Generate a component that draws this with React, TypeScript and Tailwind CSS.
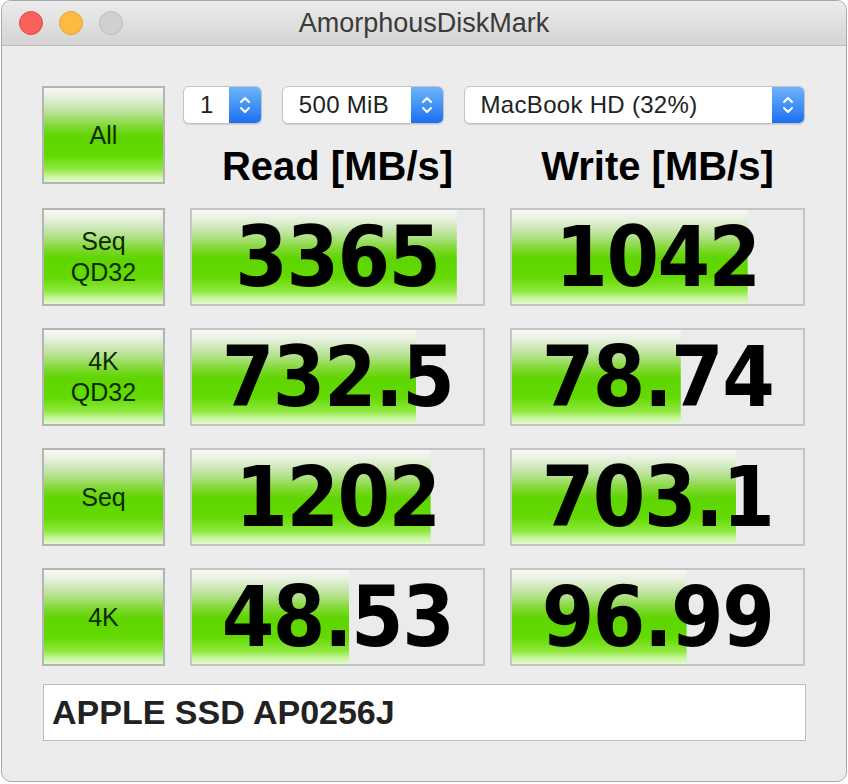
import React from "react";

const green =
  "linear-gradient(to bottom, #f7f8f6 0%, #e6f0de 10%, #b9e296 26%, #7cd82c 42%, #5ed500 52%, #64da04 72%, #8ee83c 86%, #c9f59f 94%, #e4fbd0 100%)";

const rows = [
  { label: ["Seq", "QD32"], read: "3365", readPct: 91, write: "1042", writePct: 81 },
  { label: ["4K", "QD32"], read: "732.5", readPct: 77, write: "78.74", writePct: 58 },
  { label: ["Seq"], read: "1202", readPct: 82, write: "703.1", writePct: 77 },
  { label: ["4K"], read: "48.53", readPct: 54, write: "96.99", writePct: 60 },
];

const Chevrons = () => (
  <svg width="14" height="22" viewBox="0 0 14 22" fill="none" stroke="white" strokeWidth="2" strokeLinecap="round" strokeLinejoin="round">
    <path d="M3 8 L7 4 L11 8" />
    <path d="M3 14 L7 18 L11 14" />
  </svg>
);

const Popup = ({ text, width }: { text: string; width: string }) => (
  <div className={`${width} flex h-[38px] rounded-[6px] border border-[#c4c4c4] bg-white shadow-[0_1px_1px_rgba(0,0,0,0.12)] overflow-hidden`}>
    <div className="flex-1 flex items-center pl-[16px] text-[24px] text-[#222] font-['Liberation_Sans',Arial,sans-serif] tracking-[0.3px]">
      {text}
    </div>
    <div className="w-[32px] flex items-center justify-center bg-gradient-to-b from-[#6cb3fb] to-[#1a6ff0]">
      <Chevrons />
    </div>
  </div>
);

const LabelButton = ({ lines }: { lines: string[] }) => (
  <div
    className="w-[123px] h-[98px] border-2 border-[#b4b4b4] flex flex-col items-center justify-center text-[25px] leading-[31px] text-[#0c2a00] font-['Liberation_Sans',Arial,sans-serif]"
    style={{ backgroundImage: green }}
  >
    {lines.map((l) => (
      <span key={l}>{l}</span>
    ))}
  </div>
);

const Cell = ({ value, pct }: { value: string; pct: number }) => (
  <div
    className="w-[295px] h-[98px] border-2 border-[#c4c4c4] bg-[#ebebeb] bg-no-repeat flex items-center justify-center text-[84px] font-bold text-black font-['DejaVu_Sans_Condensed','DejaVu_Sans',sans-serif] [font-stretch:condensed] tracking-[-1.5px]"
    style={{ backgroundImage: green, backgroundSize: `${pct}% 100%` }}
  >
    {value}
  </div>
);

export default function App() {
  return (
    <div className="w-[848px] h-[784px] bg-white">
      <div className="w-[846px] h-[782px] ml-[1px] rounded-[10px] border border-[#a9a9a9] bg-[#ececec] overflow-hidden flex flex-col">
        <div className="h-[45px] shrink-0 flex items-center border-b border-[#bdbdbd] bg-gradient-to-b from-[#ececec] to-[#d4d4d4]">
          <div className="w-[121px] flex gap-[16px] pl-[17px]">
            <span className="w-[24px] h-[24px] rounded-full bg-[#fc605c] border border-[#de4a46]" />
            <span className="w-[24px] h-[24px] rounded-full bg-[#fdbc40] border border-[#dea236]" />
            <span className="w-[24px] h-[24px] rounded-full bg-[#d0d0d0] border border-[#bbbbbb]" />
          </div>
          <div className="flex-1 text-center pr-[121px] text-[27px] text-[#3a3a3a] font-['Liberation_Sans',Arial,sans-serif]">
            AmorphousDiskMark
          </div>
        </div>

        <div className="pl-[40px] pt-[40px] flex flex-col gap-[22px]">
          <div className="flex">
            <LabelButton lines={["All"]} />
            <div className="ml-[18px] w-[622px] flex flex-col">
              <div className="flex gap-[20px]">
                <Popup text="1" width="w-[79px]" />
                <Popup text="500 MiB" width="w-[162px]" />
                <Popup text="MacBook HD (32%)" width="w-[342px]" />
              </div>
              <div className="flex gap-[25px] pl-[7px] mt-[22px] text-[40px] font-bold text-black font-['Liberation_Sans',Arial,sans-serif] leading-[40px]">
                <div className="w-[295px] text-center">Read [MB/s]</div>
                <div className="w-[295px] text-center">Write [MB/s]</div>
              </div>
            </div>
          </div>

          {rows.map((r) => (
            <div key={r.label.join("") + r.read} className="flex gap-[25px]">
              <LabelButton lines={r.label} />
              <Cell value={r.read} pct={r.readPct} />
              <Cell value={r.write} pct={r.writePct} />
            </div>
          ))}

          <div className="w-[763px] h-[57px] mt-[-4px] ml-[1px] bg-white border border-[#bdbdbd] flex items-center pl-[8px] text-[34px] font-bold text-[#222] font-['Liberation_Sans',Arial,sans-serif]">
            APPLE SSD AP0256J
          </div>
        </div>
      </div>
    </div>
  );
}
